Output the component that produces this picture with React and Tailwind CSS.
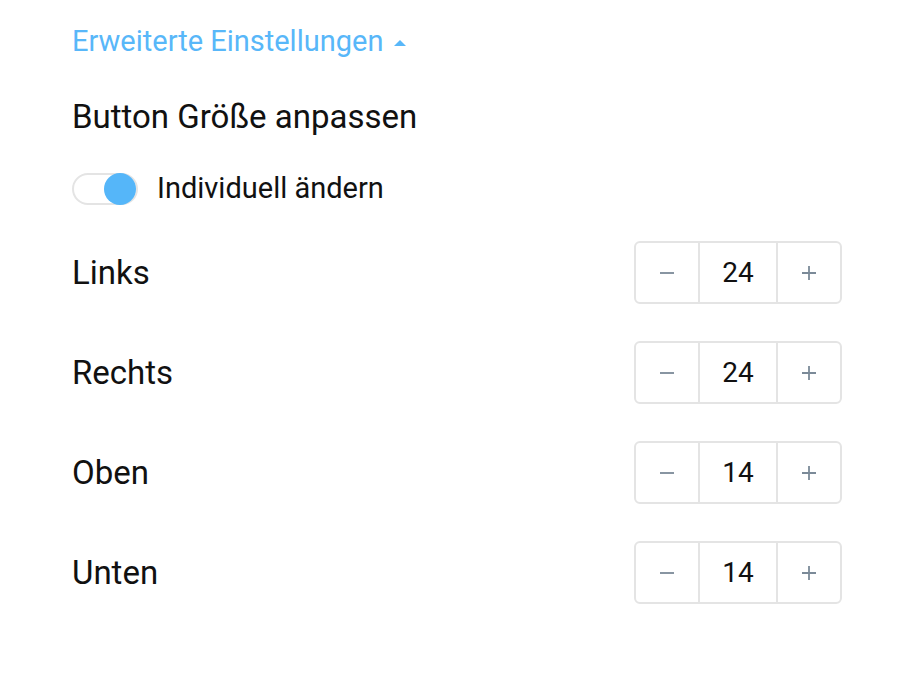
import React, { useState } from 'react';

const rows = [
  { label: 'Links', value: 24 },
  { label: 'Rechts', value: 24 },
  { label: 'Oben', value: 14 },
  { label: 'Unten', value: 14 },
];

function Stepper({ value }) {
  return (
    <div className="flex h-[63px] rounded-[6px] border-2 border-[#e4e4e4] bg-white">
      <button className="flex w-[62px] items-center justify-center">
        <svg width="16" height="16" viewBox="0 0 16 16">
          <path d="M1 8h14" stroke="#7b8a98" strokeWidth="1.8" />
        </svg>
      </button>
      <div className="flex w-[80px] items-center justify-center border-x-2 border-[#e4e4e4] text-[28px] text-[#111]">
        {value}
      </div>
      <button className="flex w-[62px] items-center justify-center">
        <svg width="16" height="16" viewBox="0 0 16 16">
          <path d="M1 8h14M8 1v14" stroke="#7b8a98" strokeWidth="1.8" />
        </svg>
      </button>
    </div>
  );
}

export default function App() {
  const [on, setOn] = useState(true);

  return (
    <div className="min-h-[678px] w-[920px] bg-white pl-[72px] pr-[78px] pt-[24px] font-['Roboto',sans-serif] text-[#111]">
      <div className="flex h-[36px] items-center gap-[11px] text-[29px] text-[#58b7f9]">
        <span>Erweiterte Einstellungen</span>
        <svg width="12" height="7" viewBox="0 0 12 7">
          <path d="M0 7L6 1l6 6z" fill="#58b7f9" />
        </svg>
      </div>

      <div className="mt-[39px] text-[33px] leading-[36px]">Button Größe anpassen</div>

      <div className="mt-[38px] flex h-[32px] items-center gap-[19px]">
        <button
          onClick={() => setOn(!on)}
          className="relative h-[32px] w-[66px] rounded-full border-2 border-[#e4e4e4] bg-white"
        >
          <span className="absolute right-0 top-[-2px] h-[32px] w-[32px] rounded-full bg-[#55b6f9]" />
        </button>
        <span className="text-[29px]">Individuell ändern</span>
      </div>

      <div className="mt-[36px] flex flex-col gap-[37px]">
        {rows.map((row) => (
          <div key={row.label} className="flex h-[63px] items-center justify-between">
            <span className="text-[33px]">{row.label}</span>
            <Stepper value={row.value} />
          </div>
        ))}
      </div>
    </div>
  );
}
